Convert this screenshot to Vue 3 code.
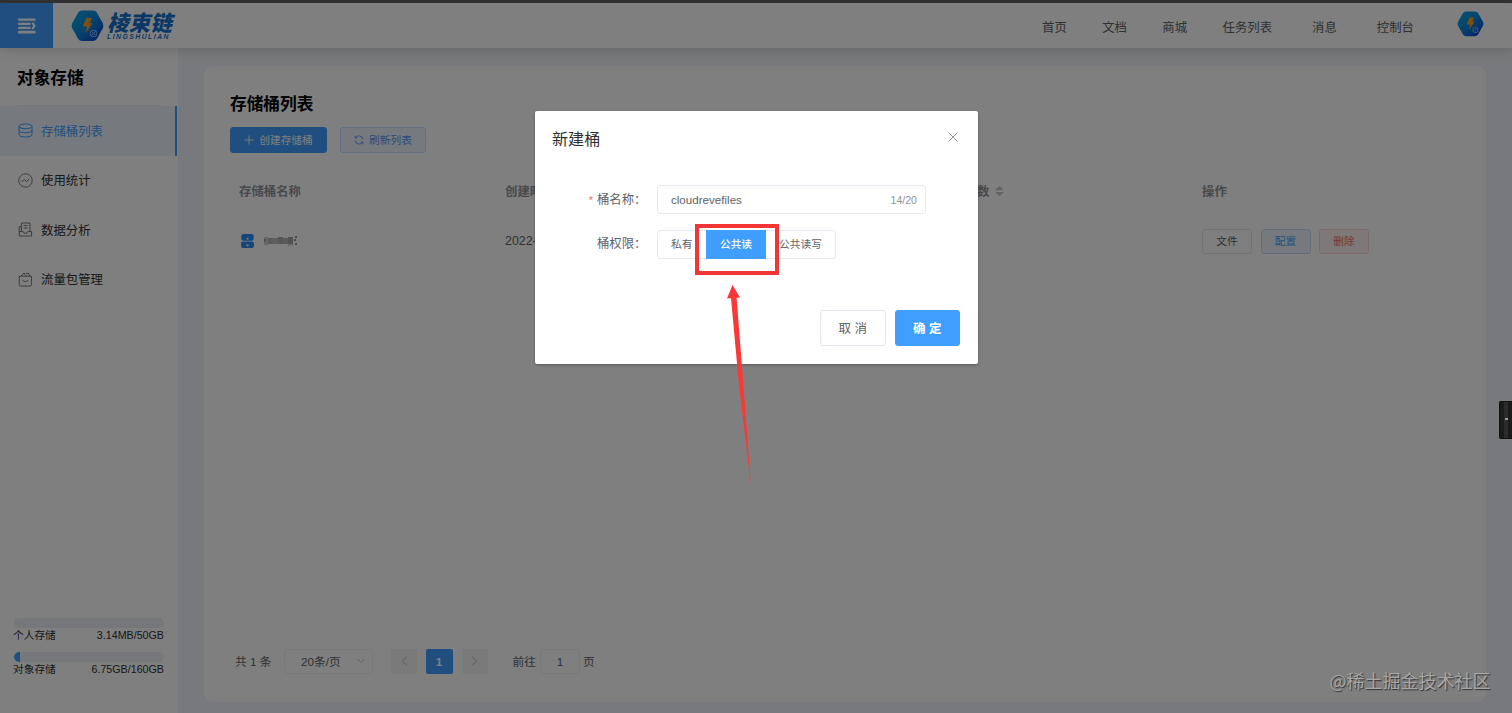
<template>
  <div class="page">
    <div class="topline"></div>
    <header class="header">
      <div class="fold-btn">
        <svg width="18" height="16" viewBox="0 0 18 16">
          <g fill="#fff">
            <rect x="0" y="0.4" width="17.6" height="2.4" rx="1" />
            <rect x="0" y="4.8" width="12.8" height="2.2" rx="1" />
            <rect x="0" y="8.8" width="12.8" height="2.2" rx="1" />
            <rect x="0" y="12.8" width="17.6" height="2.6" rx="1" />
            <path d="M13.4 4.4 H15.6 L17.6 7.9 L15.6 11.2 H13.4 L15 7.9 Z" />
          </g>
        </svg>
      </div>
      <div class="logo">
        <svg class="logo-mark" width="33" height="32" viewBox="0 0 33 32">
          <defs>
            <linearGradient id="hexA" x1="0" y1="0" x2="1" y2="1">
              <stop offset="0" stop-color="#0fa8e4" />
              <stop offset="0.5" stop-color="#0a86dc" />
              <stop offset="1" stop-color="#1536c8" />
            </linearGradient>
          </defs>
          <path d="M11 0.5 H22 Q24.5 0.5 25.8 2.6 L31.8 13.2 Q33 15.8 31.8 18.3 L25.8 28.9 Q24.5 31 22 31 H11 Q8.5 31 7.2 28.9 L1.2 18.3 Q0 15.8 1.2 13.2 L7.2 2.6 Q8.5 0.5 11 0.5 Z" fill="url(#hexA)" />
          <path d="M15.5 8 L21 8 L18.7 13 L21.5 13.2 L14.6 23.5 L16 16.8 L11.5 16.3 Z" fill="#f5a01e" />
          <g fill="none" stroke="#8fc4ff" stroke-width="0.9">
            <rect x="19.5" y="20.5" width="6" height="6" rx="2" />
            <path d="M20.5 25.5 L25 21 M21 21.8 L24.4 25.2" />
          </g>
        </svg>
        <div class="logo-text">
          <span class="logo-cn">棱束链</span>
          <span class="logo-en">LINGSHULIAN</span>
        </div>
      </div>
      <nav class="nav">
        <a v-for="item in navItems" :key="item">{{ item }}</a>
      </nav>
      <svg class="avatar" width="27" height="26" viewBox="0 0 33 32">
        <path d="M11 0.5 H22 Q24.5 0.5 25.8 2.6 L31.8 13.2 Q33 15.8 31.8 18.3 L25.8 28.9 Q24.5 31 22 31 H11 Q8.5 31 7.2 28.9 L1.2 18.3 Q0 15.8 1.2 13.2 L7.2 2.6 Q8.5 0.5 11 0.5 Z" fill="url(#hexA)" />
        <path d="M15.5 8 L21 8 L18.7 13 L21.5 13.2 L14.6 23.5 L16 16.8 L11.5 16.3 Z" fill="#f5a01e" />
        <g fill="none" stroke="#8fc4ff" stroke-width="1">
          <rect x="19.5" y="20.5" width="6" height="6" rx="2" />
          <path d="M20.5 25.5 L25 21" />
        </g>
      </svg>
    </header>

    <div class="body">
      <aside class="sidebar">
        <h2 class="side-title">对象存储</h2>
        <ul class="menu">
          <li v-for="(item, i) in menuItems" :key="item.label" :class="['menu-item', { active: i === 0 }]">
            <svg width="15" height="15" viewBox="0 0 15 15" fill="none" stroke="currentColor" stroke-width="1">
              <path v-for="d in item.paths" :key="d" :d="d" />
            </svg>
            <span>{{ item.label }}</span>
          </li>
        </ul>
        <div class="storage">
          <div v-for="s in storages" :key="s.name" class="storage-item">
            <div class="bar"><div class="bar-inner" :style="{ width: s.percent + '%' }"></div></div>
            <div class="storage-row">
              <span>{{ s.name }}</span>
              <span>{{ s.usage }}</span>
            </div>
          </div>
        </div>
      </aside>

      <main class="card">
        <h2 class="card-title">存储桶列表</h2>
        <div class="toolbar">
          <button class="btn create">
            <svg width="10" height="10" viewBox="0 0 10 10" stroke="currentColor" stroke-width="0.9"><path d="M5 0.5 V9.5 M0.5 5 H9.5" /></svg>
            <span>创建存储桶</span>
          </button>
          <button class="btn refresh">
            <svg width="10" height="10" viewBox="0 0 10 10" fill="none" stroke="currentColor" stroke-width="0.9">
              <path d="M1.2 0.8 V3 H3.4 M1.3 3 A4 4 0 0 1 8.8 4.4 M8.8 9.2 V7 H6.6 M8.7 7 A4 4 0 0 1 1.2 5.6" />
            </svg>
            <span>刷新列表</span>
          </button>
        </div>

        <div class="table">
          <div class="tr th">
            <div>存储桶名称</div>
            <div>创建时间</div>
            <div class="sortable">
              <span>数</span>
              <svg width="9" height="10" viewBox="0 0 9 10" fill="#c0c4cc"><path d="M0 4.3 L4.5 0 L9 4.3 Z M0 5.9 L4.5 10 L9 5.9 Z" /></svg>
            </div>
            <div>操作</div>
          </div>
          <div class="tr">
            <div class="bucket">
              <svg width="13" height="14" viewBox="0 0 13 14">
                <rect x="0.3" y="0" width="12.4" height="6.8" rx="2.2" fill="#2d8cf0" />
                <rect x="0" y="7.5" width="13" height="6.5" rx="2.2" fill="#2d8cf0" />
                <rect x="5.3" y="4" width="2.4" height="1.6" rx="0.8" fill="#fff" />
                <rect x="5.3" y="10.6" width="2.4" height="1.6" rx="0.8" fill="#fff" />
              </svg>
              <svg width="34" height="10" viewBox="0 0 34 10">
                <rect v-for="(b, i) in mosaic" :key="i" :x="b[0]" :y="b[1]" :width="b[2]" :height="b[3]" :fill="b[4]" />
              </svg>
            </div>
            <div>2022-</div>
            <div></div>
            <div class="ops">
              <button class="op">文件</button>
              <button class="op primary">配置</button>
              <button class="op danger">删除</button>
            </div>
          </div>
        </div>

        <div class="pager">
          <span class="total">共 1 条</span>
          <div class="select">
            <span>20条/页</span>
            <svg width="8" height="6" viewBox="0 0 8 6" fill="none" stroke="#c0c4cc"><path d="M0.6 1 L4 4.6 L7.4 1" /></svg>
          </div>
          <button class="pg prev"><svg width="7" height="10" viewBox="0 0 7 10" fill="none" stroke="#b4b8c0"><path d="M5.8 0.8 L1.4 5 L5.8 9.2" /></svg></button>
          <button class="pg current">1</button>
          <button class="pg next"><svg width="7" height="10" viewBox="0 0 7 10" fill="none" stroke="#b4b8c0"><path d="M1.2 0.8 L5.6 5 L1.2 9.2" /></svg></button>
          <span class="jump">前往</span>
          <div class="jump-input">1</div>
          <span>页</span>
        </div>
      </main>
    </div>

    <div class="overlay">
      <section class="dialog">
        <div class="dialog-head">
          <span class="dialog-title">新建桶</span>
          <svg width="10" height="10" viewBox="0 0 10 10" stroke="#909399" stroke-width="1"><path d="M0.5 0.5 L9.5 9.5 M9.5 0.5 L0.5 9.5" /></svg>
        </div>
        <div class="form-row">
          <label><i>*</i>桶名称：</label>
          <div class="input">
            <span>{{ bucketName }}</span>
            <span class="count">{{ bucketName.length }}/20</span>
          </div>
        </div>
        <div class="form-row second">
          <label>桶权限：</label>
          <div class="radios">
            <span v-for="a in aclList" :key="a" :class="['radio', { on: a === acl }]" @click="acl = a">{{ a }}</span>
          </div>
        </div>
        <div class="dialog-foot">
          <button class="dbtn">取 消</button>
          <button class="dbtn ok">确 定</button>
        </div>
      </section>
    </div>

    <div class="mark-box"></div>
    <svg class="mark-arrow" width="30" height="204" viewBox="0 0 30 204">
      <path d="M7.5 0 L15 12.4 L11.6 12.8 L18.4 100 L26 201 L14 100 L6 13.2 L2 13.6 Z" fill="#fb3838" />
    </svg>
    <div class="side-handle"><i></i></div>
    <div class="watermark">@稀土掘金技术社区</div>
  </div>
</template>

<script setup>
import { ref } from 'vue';

const navItems = ['首页', '文档', '商城', '任务列表', '消息', '控制台'];

const menuItems = [
  {
    label: '存储桶列表',
    paths: [
      'M1 3.4 C1 0.2 14 0.2 14 3.4 C14 6.4 1 6.4 1 3.4 Z',
      'M1 3.4 V11.6 C1 14.8 14 14.8 14 11.6 V3.4',
      'M1 7.5 C1 10.5 14 10.5 14 7.5',
    ],
  },
  {
    label: '使用统计',
    paths: [
      'M7.5 0.8 A6.7 6.7 0 1 1 7.49 0.8 Z',
      'M3.6 9 L6.2 6.4 L8.6 8.6 L11.4 6',
    ],
  },
  {
    label: '数据分析',
    paths: [
      'M3.4 9.4 V1 H12 V9.4',
      'M5.6 3.6 H9.8 M5.6 6 H9.8',
      'M3.2 4.6 H1.2 V14 H13.6 V9.6 H9.8 L9 11.2 H6 L5.2 9.6 H1.2',
    ],
  },
  {
    label: '流量包管理',
    paths: [
      'M1.2 4.2 H13.4 V12.6 Q13.4 14 12 14 H2.6 Q1.2 14 1.2 12.6 Z',
      'M3 4 L6 1 L8 3.6 M8 1.6 L10.4 1.2 L11.6 4',
      'M4.4 8.4 Q7.4 11.2 10.2 8.4',
    ],
  },
];

const storages = [
  { name: '个人存储', usage: '3.14MB/50GB', percent: 0 },
  { name: '对象存储', usage: '6.75GB/160GB', percent: 4.2 },
];

// x, y, w, h, fill
const mosaic = [
  [0, 1, 4, 8, '#d0d0d0'],
  [4, 2, 5, 6, '#b4b4b4'],
  [9, 2, 5, 6, '#bebebe'],
  [14, 1, 5, 7, '#acacac'],
  [19, 2, 5, 6, '#b4b4b4'],
  [24, 1, 5, 7, '#a4a4a4'],
  [0, 3, 2, 3, '#a4a4a4'],
  [24, 8, 5, 2, '#d8d8d8'],
  [31, 0, 2, 2, '#999'],
  [30, 3, 2, 2, '#999'],
  [31, 7, 2, 2, '#999'],
];

const bucketName = ref('cloudrevefiles');
const aclList = ['私有', '公共读', '公共读写'];
const acl = ref('公共读');
</script>

<style>
body {
  margin: 0;
}
</style>

<style scoped>
.page {
  position: relative;
  display: flex;
  flex-direction: column;
  width: 1512px;
  height: 713px;
  overflow: hidden;
  background: #eff3f8;
  font-family: "Liberation Sans", "Noto Sans CJK SC", sans-serif;
  font-size: 12.4px;
  color: #303133;
}

button {
  font-family: inherit;
  padding: 0;
  box-sizing: border-box;
}

.topline {
  height: 3px;
  background: #666;
  flex: none;
}

.header {
  position: relative;
  display: flex;
  align-items: center;
  height: 45px;
  flex: none;
  background: #fff;
  box-shadow: 0 2px 12px rgba(0, 0, 0, 0.16);
}

.fold-btn {
  width: 53px;
  height: 45px;
  display: flex;
  align-items: center;
  justify-content: center;
  background: #409eff;
}

.logo {
  display: flex;
  align-items: center;
  margin-left: 18px;
}

.logo-text {
  display: flex;
  flex-direction: column;
  margin-left: 3px;
  padding-top: 2px;
  color: #1270cc;
  font-style: italic;
}

.logo-cn {
  font-size: 21.6px;
  line-height: 20px;
  font-weight: 900;
}

.logo-en {
  font-size: 6.8px;
  line-height: 6px;
  font-weight: 700;
  letter-spacing: 1.5px;
}

.nav {
  display: flex;
  gap: 35.4px;
  margin-left: auto;
  color: #606266;
}

.nav a {
  line-height: 20px;
  padding-top: 4px;
}

.nav a:nth-child(5),
.nav a:nth-child(6) {
  margin-left: 4.6px;
}

.avatar {
  margin: 0 28px 4px 43px;
}

.body {
  display: flex;
  flex: 1;
  min-height: 0;
}

.sidebar {
  width: 178px;
  display: flex;
  flex-direction: column;
  background: #fff;
}

.side-title {
  margin: 0 17px;
  padding-top: 18px;
  height: 39px;
  line-height: 25px;
  font-size: 16.7px;
  color: #000;
  border-bottom: 1px solid #ebeef5;
}

.menu {
  list-style: none;
  margin: 0;
  padding: 0;
}

.menu-item {
  display: flex;
  align-items: center;
  gap: 8px;
  height: 49.5px;
  padding-left: 18px;
  border-right: 2px solid transparent;
  margin-right: 1px;
}

.menu-item svg {
  color: #77797d;
}

.menu-item.active {
  color: #409eff;
  background: #ecf5ff;
  border-right-color: #409eff;
}

.menu-item.active svg {
  color: #409eff;
}

.storage {
  margin: auto 14px 34px;
  font-size: 10.7px;
}

.storage-item {
  height: 34px;
}

.storage-item:last-child {
  height: 27px;
}

.bar {
  height: 10px;
  border-radius: 5px;
  background: #ebeef5;
  overflow: hidden;
}

.bar-inner {
  height: 100%;
  background: #409eff;
  border-radius: 5px 0 0 5px;
}

.storage-row {
  display: flex;
  justify-content: space-between;
  line-height: 15px;
  margin-left: -1px;
}

.card {
  width: 1282px;
  height: 636px;
  box-sizing: border-box;
  margin: 18px 0 0 26px;
  padding: 26px 26px 0;
  display: flex;
  flex-direction: column;
  background: #fff;
  border-radius: 9px;
}

.card-title {
  margin: 0;
  font-size: 16.7px;
  line-height: 26px;
  color: #000;
}

.toolbar {
  display: flex;
  gap: 13px;
  margin-top: 9px;
}

.btn {
  display: flex;
  align-items: center;
  justify-content: center;
  gap: 5px;
  height: 26px;
  font-size: 10.7px;
  border-radius: 3px;
}

.btn span {
  padding-bottom: 1px;
}

.create {
  width: 97px;
  color: #fff;
  background: #409eff;
  border: 1px solid #409eff;
}

.refresh {
  width: 86px;
  color: #5a94f5;
  background: #ecf5ff;
  border: 1px solid #c6e0ff;
}

.table {
  margin-top: 13px;
}

.tr {
  display: grid;
  grid-template-columns: 266px 472px 225px 1fr;
  align-items: center;
  height: 50px;
  padding-left: 9px;
  color: #606266;
}

.th {
  color: #909399;
  font-weight: 700;
}

.sortable {
  display: flex;
  align-items: center;
  gap: 6px;
}

.bucket {
  display: flex;
  align-items: center;
  gap: 10px;
  padding-left: 2px;
}

.ops {
  display: flex;
  gap: 8.5px;
}

.op {
  width: 50px;
  height: 25px;
  padding-bottom: 1px;
  font-size: 10.7px;
  border-radius: 3px;
  border: 1px solid #e2e5eb;
  background: #fff;
  color: #606266;
}

.op.primary {
  color: #409eff;
  background: #ecf5ff;
  border-color: #c0dcf8;
}

.op.danger {
  color: #f56c6c;
  background: #fef0f0;
  border-color: #fbd0d0;
}

.pager {
  display: flex;
  align-items: center;
  height: 26px;
  margin: auto 0 28px 5px;
  font-size: 11.7px;
  color: #606266;
}

.pager > span,
.select span {
  padding-bottom: 1px;
}

.total {
  width: 49px;
}

.select {
  display: flex;
  align-items: center;
  justify-content: space-between;
  box-sizing: border-box;
  width: 89px;
  height: 25px;
  padding: 0 7px 0 16px;
  border: 1px solid #f0f2f5;
  border-radius: 3px;
}

.pg {
  display: flex;
  align-items: center;
  justify-content: center;
  width: 26px;
  height: 25px;
  border: 0;
  border-radius: 2px;
  background: #f4f4f5;
  font-size: 11.6px;
}

.prev {
  margin-left: 18px;
}

.current {
  margin: 0 9px 0 8.5px;
  width: 27px;
  color: #fff;
  background: #409eff;
  font-weight: 700;
}

.jump {
  margin-left: 25px;
}

.jump-input {
  box-sizing: border-box;
  width: 40px;
  height: 25px;
  margin: 0 3px 0 4px;
  line-height: 23px;
  text-align: center;
  border: 1px solid #f0f2f5;
  border-radius: 3px;
}

.overlay {
  position: absolute;
  inset: 0;
  padding: 111px 0 0 535px;
  background: rgba(0, 0, 0, 0.5);
}

.dialog {
  width: 443px;
  height: 252.5px;
  display: flex;
  flex-direction: column;
  background: #fff;
  border-radius: 2px;
  box-shadow: 0 1px 3px rgba(0, 0, 0, 0.3);
  color: #606266;
}

.dialog-head {
  display: flex;
  justify-content: space-between;
  padding: 17px 20px 0 17px;
  height: 57px;
}

.dialog-head svg {
  margin-top: 3.5px;
}

.dialog-title {
  font-size: 16.1px;
  line-height: 22px;
  color: #303133;
}

.form-row {
  display: flex;
  align-items: center;
  height: 29px;
}

.form-row.second {
  margin-top: 16.4px;
}

.form-row label {
  width: 111.5px;
  padding: 0 10.5px 1px 0;
  text-align: right;
  white-space: nowrap;
}

.form-row label i {
  margin-right: 4px;
  font-style: normal;
  font-size: 11px;
  color: #f56c6c;
}

.form-row.second label {
  padding-bottom: 4px;
}

.input {
  display: flex;
  align-items: center;
  justify-content: space-between;
  box-sizing: border-box;
  width: 269px;
  height: 29px;
  padding: 0 8px 0 13px;
  font-size: 11.6px;
  border: 1px solid #e6e9ef;
  border-radius: 3px;
}

.count {
  font-size: 10.6px;
  color: #909399;
}

.radios {
  display: flex;
  box-sizing: border-box;
  height: 29px;
  border: 1px solid #e6e9ef;
  border-radius: 3px;
}

.radio {
  padding: 0 13px;
  font-size: 10.7px;
  line-height: 27px;
}

.radio.on {
  margin: -1px 0 -1px 0.6px;
  padding: 1px 14px;
  color: #fff;
  background: #409eff;
  font-weight: 500;
}

.dialog-foot {
  display: flex;
  justify-content: flex-end;
  gap: 9px;
  margin: auto 18px 17.5px 0;
}

.dbtn {
  width: 65.5px;
  height: 36px;
  padding-bottom: 1px;
  font-size: 12.5px;
  color: #606266;
  background: #fff;
  border: 1px solid #e2e5eb;
  border-radius: 3px;
}

.dbtn.ok {
  color: #fff;
  font-weight: 700;
  background: #409eff;
  border-color: #409eff;
}

/* annotations over the dialog */
.mark-box {
  position: absolute;
  left: 695px;
  top: 224px;
  width: 76px;
  height: 43px;
  border: 4px solid #f23535;
}

.mark-arrow {
  position: absolute;
  left: 725px;
  top: 285px;
}

.side-handle {
  position: absolute;
  right: 0;
  top: 401px;
  width: 13px;
  height: 38px;
  box-sizing: border-box;
  display: flex;
  align-items: center;
  justify-content: center;
  background: linear-gradient(90deg, #1b1b1b 4px, #2c2c2c 4px, #2c2c2c 8px, #1b1b1b 8px);
  border: 1px solid #111;
  border-right: 0;
  border-radius: 2px 0 0 2px;
}

.side-handle i {
  width: 3px;
  height: 2px;
  margin-bottom: 2px;
  background: #999;
}

.watermark {
  position: absolute;
  right: 21.5px;
  top: 667px;
  font-family: "Noto Sans CJK SC", sans-serif;
  font-size: 18px;
  line-height: 27px;
  color: #a6a6a6;
  text-shadow: 1px 1px 1px #333;
}
</style>
